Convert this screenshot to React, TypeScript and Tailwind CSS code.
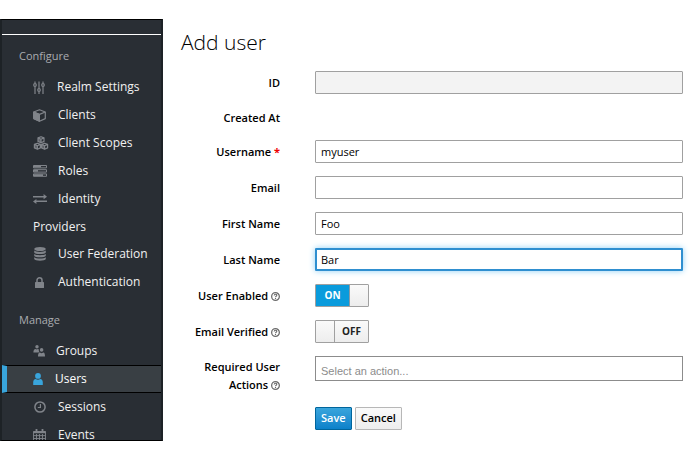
import { useState } from 'react';
import type { ReactNode } from 'react';

type Item = {
  label: string;
  more?: string;
  icon: ReactNode;
  box: string;
  active?: boolean;
};

/* ---------- Icons ---------- */

const SlidersIcon = () => (
  <svg width="12" height="13" viewBox="0 0 12 13" fill="none" stroke="currentColor" strokeWidth="1.2" className="shrink-0">
    <path d="M2 0.5v2.2M2 5.3V13M6 0.5v7.2M6 10.3V13M10 0.5v2.2M10 5.3V13" />
    <circle cx="2" cy="4" r="1.3" />
    <circle cx="6" cy="9" r="1.3" />
    <circle cx="10" cy="4" r="1.3" />
  </svg>
);

const CubeIcon = () => (
  <svg width="13" height="13" viewBox="0 0 13 13" fill="none" stroke="currentColor" strokeLinejoin="round" className="shrink-0">
    <path d="M6.5 0.8 12.3 3v6.6l-5.8 2.7L0.7 9.6V3z" strokeWidth="1.2" />
    <path d="M0.7 3 6.5 5.4 12.3 3" strokeWidth="1.2" />
    <path d="M0.7 3 6.5 5.4v6.9L0.7 9.6z" fill="currentColor" />
  </svg>
);

const SmallCube = ({ x, y }: { x: number; y: number }) => (
  <g transform={`translate(${x} ${y})`}>
    <path d="M3.5 0.5 6.5 1.7v3.5L3.5 6.6 0.5 5.2V1.7zM0.5 1.7 3.5 3l3-1.3M3.5 3v3.6" />
    <path d="M3.5 3v3.6L0.5 5.2V1.7z" fill="currentColor" fillOpacity="0.6" stroke="none" />
  </g>
);

const CubesIcon = () => (
  <svg width="16" height="14" viewBox="0 0 16 14" fill="none" stroke="currentColor" strokeWidth="1.2" strokeLinejoin="round" className="shrink-0">
    <SmallCube x={4.5} y={0.2} />
    <SmallCube x={0.9} y={6.7} />
    <SmallCube x={8.1} y={6.7} />
  </svg>
);

const TasksIcon = () => (
  <svg width="14" height="12" viewBox="0 0 14 12" fill="none" stroke="currentColor" strokeWidth="1" className="shrink-0">
    <path d="M0.5 0.5h13v2.4H0.5zM0.5 4.7h13v2.4H0.5zM0.5 8.9h13v2.4H0.5z" />
    <path d="M1 1.7h7M1 5.9h4M1 10.1h9" strokeWidth="1.6" />
  </svg>
);

const ExchangeIcon = () => (
  <svg width="14" height="10" viewBox="0 0 14 10" fill="currentColor" className="shrink-0">
    <path d="M0 2h10.6V0L14 2.7 10.6 5.3V3.4H0zM14 6.6H3.4V4.9L0 7.4 3.4 10V8.1H14z" />
  </svg>
);

const DatabaseIcon = () => (
  <svg width="12" height="14" viewBox="0 0 12 14" fill="currentColor" className="shrink-0">
    <ellipse cx="6" cy="2" rx="5.8" ry="2" />
    <path d="M0.2 3.6c1.4 1.7 10.2 1.7 11.6 0v1.8c-.8 2.2-10.8 2.2-11.6 0z" />
    <path d="M0.2 6.9c1.4 1.7 10.2 1.7 11.6 0v1.8c-.8 2.2-10.8 2.2-11.6 0z" />
    <path d="M0.2 10.2c1.4 1.7 10.2 1.7 11.6 0V12c-.8 2.2-10.8 2.2-11.6 0z" />
  </svg>
);

const LockIcon = () => (
  <svg width="9" height="11" viewBox="0 0 9 11" className="shrink-0">
    <rect y="5" width="9" height="6" rx="0.6" fill="currentColor" />
    <path d="M2 5.4V3.3a2.5 2.5 0 0 1 5 0v2.1" fill="none" stroke="currentColor" strokeWidth="1.5" />
  </svg>
);

const GroupsIcon = () => (
  <svg width="12" height="12" viewBox="0 0 12 12" fill="currentColor" className="shrink-0">
    <circle cx="4" cy="1.8" r="1.7" />
    <path d="M0.4 7.4c0-2.2.8-3.5 2.1-3.5l1.3.5 1-.5c.5 0 .9.2 1.1.6-.3.9 0 1.8.5 2.4l-1 .5z" />
    <circle cx="8.6" cy="4.9" r="1.8" />
    <path d="M5 11.6c0-2.6.5-4.2 1.8-4.2l1.8.8 1.8-.8c1.2 0 1.6 1.6 1.6 4.2z" />
  </svg>
);

const UserIcon = () => (
  <svg width="10" height="12" viewBox="0 0 10 12" fill="currentColor" className="shrink-0">
    <circle cx="5" cy="2.9" r="2.9" />
    <path d="M0.2 12V9.2c0-2 1-3.1 2.5-3.3 1.3 1 3.3 1 4.6 0 1.5.2 2.5 1.3 2.5 3.3V12z" />
  </svg>
);

const ClockIcon = () => (
  <svg width="12" height="12" viewBox="0 0 12 12" fill="none" stroke="currentColor" strokeWidth="1.5" className="shrink-0">
    <circle cx="6" cy="6" r="5.1" />
    <path d="M6.4 3v3.5H3.8" strokeWidth="1.2" />
  </svg>
);

const CalendarIcon = () => (
  <svg width="13" height="13" viewBox="0 0 13 13" fill="none" stroke="currentColor" className="shrink-0">
    <path d="M0.5 2.5h12v10H0.5zM0.5 6.6h12M0.5 9.5h12M3.5 5v7.5M6.5 5v7.5M9.5 5v7.5" strokeWidth="0.9" />
    <path d="M0.5 3.2h12" strokeWidth="2" />
    <path d="M3.5 0v3.4M9.5 0v3.4" strokeWidth="1.8" />
  </svg>
);

const HelpIcon = () => (
  <svg width="9" height="9" viewBox="0 0 18 18" fill="none" stroke="#6c6c6c" className="inline-block align-[-1px]">
    <circle cx="9" cy="9" r="7.7" strokeWidth="2.6" />
    <path d="M6.4 7c0-3.2 5.2-3.2 5.2-.4 0 2-2.6 2-2.6 3.8M9 12v2.2" strokeWidth="2.2" />
  </svg>
);

/* ---------- Sidebar ---------- */

const configure: Item[] = [
  { label: 'Realm Settings', icon: <SlidersIcon />, box: 'w-6' },
  { label: 'Clients', icon: <CubeIcon />, box: 'w-[25px]' },
  { label: 'Client Scopes', icon: <CubesIcon />, box: 'w-[25px]' },
  { label: 'Roles', icon: <TasksIcon />, box: 'w-[25px]' },
  { label: 'Identity', more: 'Providers', icon: <ExchangeIcon />, box: 'w-[25px]' },
  { label: 'User Federation', icon: <DatabaseIcon />, box: 'w-[25px] pl-px' },
  { label: 'Authentication', icon: <LockIcon />, box: 'w-[25px] pl-0.5' },
];

const manage: Item[] = [
  { label: 'Groups', icon: <GroupsIcon />, box: 'w-[23px]' },
  { label: 'Users', icon: <UserIcon />, box: 'w-[22px]', active: true },
  { label: 'Sessions', icon: <ClockIcon />, box: 'w-[25px] pl-px' },
  { label: 'Events', icon: <CalendarIcon />, box: 'w-[25px]' },
];

const NavItem = ({ item }: { item: Item }) => (
  <li>
    <a
      href="#"
      className={
        item.active
          ? 'block border-y border-l-[5px] border-y-black border-l-[#39a5dc] bg-[#393f44] pl-[26px] text-white'
          : 'block pl-[31px] text-[#f1f1f1]'
      }
    >
      <span className={item.active ? 'flex h-[26px] items-center' : 'flex h-7 items-center'}>
        <span className={`flex shrink-0 ${item.box} ${item.active ? 'text-[#39a5dc]' : 'text-[#80848a]'}`}>
          {item.icon}
        </span>
        {item.label}
      </span>
      {item.more && <span className="flex h-[27px] items-center">{item.more}</span>}
    </a>
  </li>
);

const Sidebar = () => (
  <aside className="w-[163px] shrink-0 overflow-hidden border-x-2 border-y border-x-[#1d2226] border-y-black bg-[#292e34] text-[12px]">
    <div className="h-[15px] border-b border-white" />
    <nav>
      <h2 className="flex h-[38px] items-center pl-[17px] pt-1 text-[11px] text-[#a9acb0]">Configure</h2>
      <ul>
        {configure.map((item) => (
          <NavItem key={item.label} item={item} />
        ))}
      </ul>
      <h2 className="flex h-[41px] items-center pl-[17px] pt-2 text-[11px] text-[#a9acb0]">Manage</h2>
      <ul>
        {manage.map((item) => (
          <NavItem key={item.label} item={item} />
        ))}
      </ul>
    </nav>
  </aside>
);

/* ---------- Form ---------- */

const labelClass = 'w-[99px] shrink-0 text-right font-semibold leading-[18px]';

const TextRow = ({ id, label, value, required, disabled, focused }: {
  id: string;
  label: string;
  value?: string;
  required?: boolean;
  disabled?: boolean;
  focused?: boolean;
}) => (
  <div className="flex items-center gap-[35px]">
    <label htmlFor={id} className={labelClass}>
      {label}
      {required && <span className="font-bold text-[#e00]"> *</span>}
    </label>
    <input
      id={id}
      type="text"
      defaultValue={value}
      disabled={disabled}
      className={
        focused
          ? 'h-[23px] min-w-0 flex-1 rounded-[1px] border-2 border-[#2f8fd0] px-1 shadow-[0_0_6px_#8fd0f5] outline-none'
          : 'h-[23px] min-w-0 flex-1 rounded-[1px] border border-[#a0a0a0] px-[5px] outline-none disabled:bg-[#f3f3f3]'
      }
    />
  </div>
);

const SwitchRow = ({ id, label, initial }: { id: string; label: string; initial: boolean }) => {
  const [on, setOn] = useState(initial);
  const thumb = <span className="w-[18px] bg-linear-to-b from-[#fafafa] to-[#ededed]" />;

  return (
    <div className="flex items-center gap-[35px]">
      <label htmlFor={id} className={labelClass}>
        {label} <HelpIcon />
      </label>
      <label className="relative flex h-[23px] w-[54px] rounded-[1px] border border-[#a0a0a0] text-[10px] font-bold">
        <input id={id} type="checkbox" checked={on} onChange={() => setOn(!on)} className="sr-only" />
        {on ? (
          <>
            <span className="flex flex-1 items-center justify-center border-r border-[#8a9aa5] bg-[#0a9bdc] text-white">ON</span>
            {thumb}
          </>
        ) : (
          <>
            {thumb}
            <span className="flex flex-1 items-center justify-center border-l border-[#a0a0a0] bg-linear-to-b from-[#fafafa] to-[#ededed] text-[#222]">OFF</span>
          </>
        )}
      </label>
    </div>
  );
};

const App: React.FC = () => {
  return (
    <div className="flex h-screen bg-white py-[19px] font-['Open_Sans',sans-serif] text-[11px] text-black">
      <Sidebar />

      <main className="min-w-0 flex-1 pl-[18px] pr-[7px] pt-2">
        <h1 className="text-[21px] font-light leading-[30px]">Add user</h1>

        <form className="mt-3.5 flex flex-col gap-[13px]" onSubmit={(e) => e.preventDefault()}>
          <TextRow id="id" label="ID" disabled />
          <div className={`${labelClass} pt-0.5`}>Created At</div>
          <TextRow id="username" label="Username" value="myuser" required />
          <TextRow id="email" label="Email" />
          <TextRow id="firstName" label="First Name" value="Foo" />
          <TextRow id="lastName" label="Last Name" value="Bar" focused />
          <SwitchRow id="enabled" label="User Enabled" initial />
          <SwitchRow id="verified" label="Email Verified" initial={false} />

          <div className="flex gap-[35px]">
            <label htmlFor="actions" className={`${labelClass} pt-0.5`}>
              Required User Actions <HelpIcon />
            </label>
            <input
              id="actions"
              type="text"
              placeholder="Select an action..."
              className="h-[25px] min-w-0 flex-1 border border-[#8c8c8c] px-[5px] pt-1 font-['Liberation_Sans',sans-serif] outline-none placeholder:text-[#8c8c8c]"
            />
          </div>

          {/* Acciones */}
          <div className="flex gap-[3px] pl-[134px]">
            <button type="submit" className="h-[23px] rounded-[1px] border border-[#00659c] bg-linear-to-b from-[#39a5dc] to-[#0a81ca] px-[5px] font-semibold text-white">
              Save
            </button>
            <button type="button" className="h-[23px] rounded-[1px] border border-[#b7b7b7] bg-linear-to-b from-[#fafafa] to-[#ededed] px-[5px] font-semibold">
              Cancel
            </button>
          </div>
        </form>
      </main>
    </div>
  );
};

export default App;
